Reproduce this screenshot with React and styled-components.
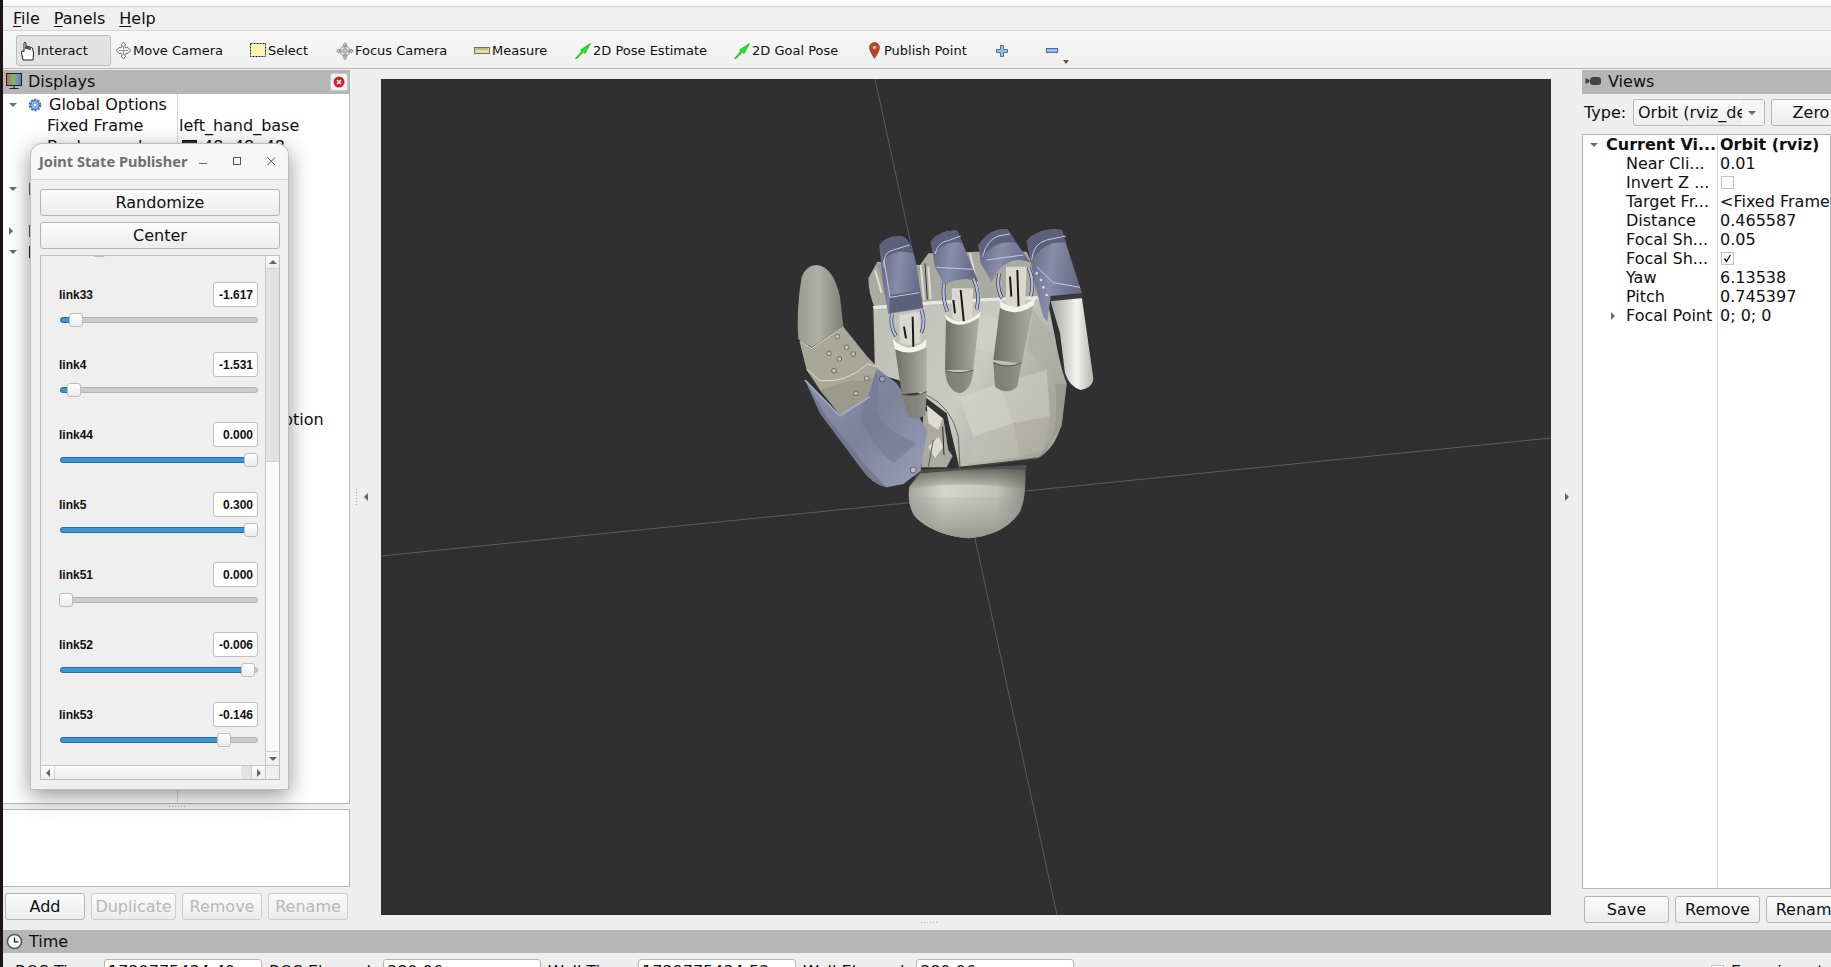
import React from 'react'
import styled, { createGlobalStyle } from 'styled-components'

const GlobalStyle = createGlobalStyle`
  html, body {
    margin: 0;
    padding: 0;
    width: 100%;
    height: 100%;
    overflow: hidden;
    background: #eeeeee;
  }
  * { box-sizing: border-box; }
`
const Page = styled.div`
  position: relative;
  width: 1831px;
  height: 967px;
  overflow: hidden;
  display: flex;
  flex-direction: column;
  background: #eeeeee;
  border-left: 3px solid #1b1317;
  font-family: "DejaVu Sans", sans-serif;
  font-size: 16px;
  color: #101010;
`
const TopStrip = styled.div`
  height: 7px;
  flex: none;
  background: #fbfbfb;
  border-bottom: 1px solid #cfcfcf;
`
const MenuBar = styled.div`
  height: 24px;
  flex: none;
  display: flex;
  align-items: center;
  padding-left: 10px;
  gap: 14px;
  background: #efefef;
  border-bottom: 1px solid #d6d6d6;
`
const MenuItem = styled.span`
  u { text-underline-offset: 2px; text-decoration-thickness: 1px; }
`
const Toolbar = styled.div`
  height: 38px;
  flex: none;
  display: flex;
  align-items: center;
  padding: 2px 0 0 13px;
  font-size: 13px;
  background: linear-gradient(#f7f7f7, #efefef);
  border-bottom: 1px solid #b9b9b9;
`
const Tool = styled.div`
  width: ${p => p.$w}px;
  flex: none;
  height: 31px;
  display: flex;
  align-items: center;
  gap: ${p => p.$gap || 1}px;
  white-space: nowrap;
  position: relative;
  ${p => p.$active && `
    background: #e2e2e2;
    border: 1px solid #bdbdbd;
    border-radius: 3px;
    padding-left: 3px;
    margin-right: 4px;
  `}
`
const MenuArrow = styled.span`
  position: absolute;
  left: 17px;
  bottom: 2px;
  border: 3px solid transparent;
  border-top: 4px solid #555555;
  border-bottom: 0;
`
const Main = styled.div`
  flex: none;
  height: 861px;
  display: flex;
`
const Dock = styled.div`
  width: ${p => p.$w}px;
  flex: none;
  display: flex;
  flex-direction: column;
`
const DockHeader = styled.div`
  height: ${p => p.$h || 24}px;
  flex: none;
  margin-top: ${p => p.$flush ? 0 : 1}px;
  padding-bottom: ${p => p.$flush ? 0 : 2}px;
  display: flex;
  align-items: center;
  gap: 6px;
  padding-left: 3px;
  background: #b6b6b6;
  position: relative;
`
const CloseBox = styled.div`
  position: absolute;
  right: 2px;
  top: 3px;
  width: 18px;
  height: 18px;
  background: #f4f4f4;
  border: 1px solid #c9c9c9;
  border-radius: 3px;
  display: flex;
  align-items: center;
  justify-content: center;
`
const TreeBox = styled.div`
  flex: none;
  height: ${p => p.$h}px;
  background: #ffffff;
  border: 1px solid #b5b5b5;
  border-width: ${p => p.$top ? '1px 1px 1px 0' : '0 1px 1px 0'};
  ${p => p.$framed && 'border-left-width: 1px;'}
  display: flex;
  flex-direction: column;
  position: relative;
  overflow: hidden;
`
const ColumnLine = styled.div`
  position: absolute;
  left: ${p => p.$x}px;
  top: 0;
  bottom: 0;
  width: 1px;
  background: #d8d8d8;
`
const DisplayRow = styled.div`
  height: 21px;
  flex: none;
  display: grid;
  grid-template-columns: 174px 1fr;
  align-items: center;
  white-space: nowrap;
`
const NameCell = styled.div`
  display: flex;
  align-items: center;
  padding-left: ${p => p.$indent}px;
  gap: 7px;
  position: relative;
  overflow: hidden;
  height: 100%;
`
const ValueCell = styled.div`
  padding-left: ${p => p.$pad || 2}px;
  display: flex;
  align-items: center;
  gap: 6px;
`
const Expander = styled.span`
  position: absolute;
  left: ${p => p.$x}px;
  top: 50%;
  ${p => p.$open ? `
    margin-top: -2px;
    border-left: 4px solid transparent;
    border-right: 4px solid transparent;
    border-top: 4px solid #6e6e6e;
  ` : `
    margin-top: -4px;
    border-top: 4px solid transparent;
    border-bottom: 4px solid transparent;
    border-left: 4px solid #6e6e6e;
  `}
`
const Swatch = styled.span`
  width: 15px;
  height: 13px;
  margin-left: 3px;
  background: #303030;
  border: 1px solid #111111;
`
const DotsH = styled.div`
  height: 5px;
  flex: none;
  display: flex;
  justify-content: center;
  align-items: center;
  &::before {
    content: "";
    width: 16px;
    height: 1px;
    background-image: linear-gradient(to right, #a5a5a5 1px, transparent 1px);
    background-size: 3px 1px;
  }
`
const ButtonRow = styled.div`
  flex: none;
  display: flex;
  gap: ${p => p.$gap}px;
  padding: ${p => p.$pad};
`
const PushButton = styled.button`
  width: ${p => p.$w}px;
  height: 27px;
  flex: none;
  padding: 0;
  margin-left: ${p => p.$ml || 0}px;
  font-family: inherit;
  font-size: 16px;
  color: ${p => p.disabled ? '#b8b8b8' : '#101010'};
  background: linear-gradient(#fbfbfb, #ececec);
  border: 1px solid ${p => p.disabled ? '#cccccc' : '#b4b4b4'};
  border-radius: 3px;
`
const Center = styled.div`
  flex: 1;
  display: flex;
  position: relative;
`
const Gutter = styled.div`
  width: 31px;
  flex: none;
  height: 856px;
  display: flex;
  align-items: center;
  justify-content: ${p => p.$right ? 'center' : 'flex-end'};
  padding-right: ${p => p.$right ? 0 : 13}px;
  gap: 7px;
`
const GripV = styled.span`
  width: 1px;
  height: 16px;
  background-image: linear-gradient(#a8a8a8 1px, transparent 1px);
  background-size: 1px 3px;
`
const ViewColumn = styled.div`
  flex: 1;
  display: flex;
  flex-direction: column;
  padding-top: 10px;
`
const Viewport = styled.svg`
  display: block;
  width: 1170px;
  height: 836px;
  flex: none;
  background: #303030;
`
const Grip = styled.div`
  height: 15px;
  display: flex;
  padding-left: 540px;
  align-items: center;
  &::before {
    content: "";
    width: 16px;
    height: 1px;
    background-image: linear-gradient(to right, #b0b0b0 1px, transparent 1px);
    background-size: 3px 1px;
  }
`
const TypeRow = styled.div`
  height: 27px;
  flex: none;
  margin: 5px 0 8px;
  display: flex;
  align-items: center;
  white-space: nowrap;
`
const TypeLabel = styled.span`
  width: 51px;
  flex: none;
  padding-left: 2px;
`
const Combo = styled.div`
  width: 132px;
  height: 27px;
  flex: none;
  display: flex;
  align-items: center;
  padding-left: 4px;
  border: 1px solid #b9b9b9;
  border-radius: 3px;
  background: linear-gradient(#fbfbfb, #ececec);
  position: relative;
  overflow: hidden;
`
const ComboArrow = styled.span`
  position: absolute;
  right: 0;
  top: 0;
  bottom: 0;
  width: 22px;
  background: #f4f4f4;
  &::after {
    content: "";
    position: absolute;
    left: 6px;
    top: 11px;
    border-left: 4px solid transparent;
    border-right: 4px solid transparent;
    border-top: 4px solid #666666;
  }
`
const ViewRow = styled.div`
  height: 19px;
  flex: none;
  display: grid;
  grid-template-columns: 135px 1fr;
  align-items: center;
  white-space: nowrap;
  font-weight: ${p => p.$bold ? 700 : 400};
`
const CheckBox = styled.span`
  width: 13px;
  height: 13px;
  flex: none;
  border: 1px solid #c4c4c4;
  background: #ffffff;
  display: inline-flex;
  align-items: center;
  justify-content: center;
  margin-left: 1px;
  margin-top: ${p => p.$mt || 0}px;
`
const TimeDock = styled.div`
  flex: none;
  display: flex;
  flex-direction: column;
`
const TimeFields = styled.div`
  display: flex;
  align-items: flex-start;
  padding-top: 6px;
  white-space: nowrap;
  position: relative;
`
const FieldLabel = styled.span`
  width: ${p => p.$w}px;
  flex: none;
  padding-top: 3px;
  padding-left: ${p => p.$pad}px;
`
const TimeInput = styled.div`
  width: 158px;
  height: 25px;
  flex: none;
  background: #ffffff;
  border: 1px solid #b5b5b5;
  border-radius: 3px;
  padding: 2px 0 0 3px;
`
const Experimental = styled.div`
  position: absolute;
  left: 1707px;
  top: 9px;
  display: flex;
  gap: 7px;
`
const JointWindow = styled.div`
  position: absolute;
  left: 27px;
  top: 143px;
  width: 259px;
  height: 647px;
  display: flex;
  flex-direction: column;
  background: #efefef;
  border: 1px solid #bdbdbd;
  border-radius: 12px 12px 0 0;
  box-shadow: 0 6px 22px rgba(0, 0, 0, 0.42);
`
const TitleBar = styled.div`
  height: 36px;
  flex: none;
  display: flex;
  align-items: center;
  padding: 0 0 2px 8px;
  background: #f7f7f7;
  border-bottom: 1px solid #d5d5d5;
  border-radius: 12px 12px 0 0;
  font-family: "Noto Sans", sans-serif;
  font-size: 14.6px;
  font-weight: 700;
  color: #736f6b;
  white-space: nowrap;
`
const WinGlyph = styled.svg`
  position: absolute;
  top: ${p => p.$y}px;
  left: ${p => p.$x}px;
`
const JointBody = styled.div`
  flex: 1;
  display: flex;
  flex-direction: column;
  gap: 6px;
  padding: 9px 8px 9px 9px;
  min-height: 0;
`
const ScrollArea = styled.div`
  flex: 1;
  min-height: 0;
  border: 1px solid #bdbdbd;
  display: grid;
  grid-template-columns: 1fr 14px;
  grid-template-rows: 1fr 14px;
  overflow: hidden;
`
const SliderList = styled.div`
  overflow: hidden;
  background: #efefef;
`
const SliderRow = styled.div`
  height: 70px;
  padding: 0 7px 0 18px;
  position: relative;
  top: -44px;
`
const SliderHead = styled.div`
  height: 25px;
  display: flex;
  align-items: center;
  justify-content: space-between;
  font-family: "Liberation Sans", sans-serif;
  font-weight: 700;
  font-size: 12px;
`
const ValueBox = styled.div`
  width: 45px;
  height: 25px;
  background: #ffffff;
  border: 1px solid #c0c0c0;
  border-radius: 3px;
  display: flex;
  align-items: center;
  justify-content: flex-end;
  padding-right: 4px;
`
const Track = styled.div`
  height: 6px;
  width: 198px;
  margin: 10px 0 0 1px;
  background: #cccccc;
  border: 1px solid #b3b3b3;
  border-radius: 3px;
  position: relative;
`
const TrackFill = styled.div`
  position: absolute;
  left: -1px;
  top: -1px;
  height: 6px;
  background: #3a97d4;
  border: 1px solid #2b6c9b;
  border-radius: 3px 0 0 3px;
`
const Handle = styled.div`
  position: absolute;
  top: -5px;
  width: 14px;
  height: 14px;
  margin-left: -7px;
  background: linear-gradient(#ffffff, #ececec);
  border: 1px solid #bdbdbd;
  border-radius: 3px;
`
const VBar = styled.div`
  display: flex;
  flex-direction: column;
  border-left: 1px solid #c6c6c6;
  background: #f9f9f9;
`
const BarButton = styled.div`
  flex: none;
  display: flex;
  align-items: center;
  justify-content: center;
  height: ${p => p.$h || 'auto'};
  width: ${p => p.$w || 'auto'};
  background: linear-gradient(#fbfbfb, #ededed);
  border: 0 solid #d0d0d0;
  border-width: ${p => p.$edge || 0};
`
const VTrack = styled.div`
  height: 193px;
  flex: none;
  background: #e2e2e2;
  border-bottom: 1px solid #d0d0d0;
`
const VThumb = styled.div`
  flex: 1;
`
const HBar = styled.div`
  display: flex;
  border-top: 1px solid #c6c6c6;
  background: linear-gradient(#fbfbfb, #eeeeee);
`
const HTrack = styled.div`
  flex: none;
  width: 10px;
  background: #e2e2e2;
  margin-left: auto;
`
const Corner = styled.div`
  border-top: 1px solid #c6c6c6;
  border-left: 1px solid #c6c6c6;
  background: #efefef;
`
const Tri = styled.span`
  ${p => ({
    up: 'border-left:4px solid transparent;border-right:4px solid transparent;border-bottom:4px solid #666;',
    down: 'border-left:4px solid transparent;border-right:4px solid transparent;border-top:4px solid #666;',
    left: 'border-top:4px solid transparent;border-bottom:4px solid transparent;border-right:4px solid #666;',
    right: 'border-top:4px solid transparent;border-bottom:4px solid transparent;border-left:4px solid #666;'
  })[p.$dir]}
`

const HandIcon = () => (
  <svg width="15" height="21" viewBox="0 0 15 21">
    <path d="M3 20 L1.5 13 Q1 10.5 3 11 L4 12 L4 3 Q5 1.5 6 3 L6 9 L6 6.5 Q7 5.5 8 6.5 L8 9.5 L8 7 Q9 6 10 7 L10 10 L10 8 Q11.5 7 12.5 8 L13.5 13 L13 20 Z" fill="#ffffff" stroke="#222222" strokeWidth="1" />
  </svg>
)
const MoveIcon = () => (
  <svg width="17" height="19" viewBox="0 0 17 19">
    <path d="M8.5 1 L11 4 L10 4 L10 6 L12 7 L12 6 L16 9.5 L12 13 L12 12 L10 13 L10 15 L11 15 L8.5 18 L6 15 L7 15 L7 13 L5 12 L5 13 L1 9.5 L5 6 L5 7 L7 6 L7 4 L6 4 Z" fill="#f2f2f2" stroke="#777777" strokeWidth="1" />
    <path d="M8.5 5 V14 M4 9.5 H13" stroke="#999999" strokeWidth="1" />
  </svg>
)
const SelectIcon = () => (
  <svg width="16" height="15" viewBox="0 0 16 15">
    <rect x="0.5" y="0.5" width="15" height="13" fill="#fbf5ae" stroke="#222222" strokeDasharray="2 1" />
  </svg>
)
const FocusIcon = () => (
  <svg width="18" height="18" viewBox="0 0 18 18">
    <path d="M9 0.5 L11 3 L10 3 L10 8 L15 8 L15 7 L17.5 9 L15 11 L15 10 L10 10 L10 15 L11 15 L9 17.5 L7 15 L8 15 L8 10 L3 10 L3 11 L0.5 9 L3 7 L3 8 L8 8 L8 3 L7 3 Z" fill="#c6c6c6" stroke="#8a8a8a" strokeWidth="0.8" />
    <circle cx="9" cy="9" r="5" fill="none" stroke="#8a8a8a" />
  </svg>
)
const RulerIcon = () => (
  <svg width="16" height="8" viewBox="0 0 16 8">
    <rect x="0.5" y="0.5" width="15" height="6" fill="#e8dca0" stroke="#777055" />
    <path d="M3 1 V3 M5 1 V3 M7 1 V3 M9 1 V3 M11 1 V3 M13 1 V3" stroke="#777055" strokeWidth="0.7" />
  </svg>
)
const ArrowIcon = () => (
  <svg width="16" height="16" viewBox="0 0 16 16">
    <path d="M0.5 15.5 L7 8 L5.5 7 L15.5 0.5 L10 10.5 L8.5 9 L2 15.5 Z" fill="#1fe81f" stroke="#0a9a0a" strokeWidth="0.6" />
  </svg>
)
const PinIcon = () => (
  <svg width="14" height="17" viewBox="0 0 14 17">
    <path d="M5.5 16.5 Q0.5 9 0.5 5.5 A5 5 0 0 1 10.5 5.5 Q10.5 9 5.5 16.5 Z" fill="#b5482c" stroke="#7e3a24" strokeWidth="0.6" />
    <circle cx="5.5" cy="5.5" r="1.8" fill="#e9b39c" />
  </svg>
)
const PlusIcon = () => (
  <svg width="12" height="12" viewBox="0 0 12 12">
    <path d="M4.5 0.5 H7.5 V4.5 H11.5 V7.5 H7.5 V11.5 H4.5 V7.5 H0.5 V4.5 H4.5 Z" fill="#9dbce4" stroke="#4a73ad" />
  </svg>
)
const MinusIcon = () => (
  <svg width="12" height="5" viewBox="0 0 12 5">
    <rect x="0.5" y="0.5" width="11" height="4" fill="#9dbce4" stroke="#4a73ad" />
  </svg>
)
const MonitorIcon = () => (
  <svg width="16" height="17" viewBox="0 0 16 17">
    <defs>
      <linearGradient id="mon" x1="0" x2="1" y1="0" y2="0">
        <stop offset="0" stopColor="#d45c5c" />
        <stop offset="0.5" stopColor="#6fc46f" />
        <stop offset="1" stopColor="#6c6cd8" />
      </linearGradient>
    </defs>
    <rect x="0.5" y="0.5" width="15" height="12" fill="url(#mon)" stroke="#222222" />
    <path d="M8 13 V15 M3.5 15.5 H12.5" stroke="#222222" strokeWidth="1.2" />
  </svg>
)
const GearIcon = () => (
  <svg width="14" height="14" viewBox="0 0 14 14">
    <circle cx="7" cy="7" r="5" fill="#9cc0ec" stroke="#3f73b8" strokeWidth="2.6" strokeDasharray="2 1.15" />
    <circle cx="7" cy="7" r="4.4" fill="none" stroke="#4a7fc4" />
    <circle cx="7" cy="7" r="2" fill="#ffffff" stroke="#5a8cd0" />
  </svg>
)
const ClockIcon = () => (
  <svg width="17" height="17" viewBox="0 0 17 17">
    <circle cx="8.5" cy="8.5" r="7" fill="#ffffff" stroke="#555555" strokeWidth="1.6" />
    <path d="M8.5 4.5 V8.8 H12.5" fill="none" stroke="#111111" strokeWidth="1.3" />
  </svg>
)
const CameraIcon = () => (
  <svg width="17" height="10" viewBox="0 0 17 10">
    <path d="M0.5 2 L4.5 4 L4.5 6 L0.5 8 Z" fill="#444444" />
    <rect x="5" y="1" width="11" height="8" rx="3" fill="#444444" />
  </svg>
)
const CloseDisc = () => (
  <svg width="12" height="12" viewBox="0 0 12 12">
    <circle cx="6" cy="6" r="5.5" fill="#d81e2c" />
    <path d="M4 4 L8 8 M8 4 L4 8" stroke="#ffffff" strokeWidth="1.5" />
  </svg>
)

const tools = [
  { w: 99, icon: <HandIcon />, label: 'Interact', active: true, gap: 2 },
  { w: 135, icon: <MoveIcon />, label: 'Move Camera' },
  { w: 86, icon: <SelectIcon />, label: 'Select', gap: 2 },
  { w: 138, icon: <FocusIcon />, label: 'Focus Camera' },
  { w: 101, icon: <RulerIcon />, label: 'Measure', gap: 2 },
  { w: 159, icon: <ArrowIcon />, label: '2D Pose Estimate', gap: 2 },
  { w: 135, icon: <ArrowIcon />, label: '2D Goal Pose', gap: 2 },
  { w: 127, icon: <PinIcon />, label: 'Publish Point' },
  { w: 50, icon: <PlusIcon /> },
  { w: 40, icon: <MinusIcon />, more: true }
]

const displayRows = [
  { name: 'Global Options', indent: 25, open: true, icon: <GearIcon /> },
  { name: 'Fixed Frame', indent: 44, value: 'left_hand_base' },
  { name: 'Background...', indent: 44, value: '48; 48; 48', swatch: true },
  { name: 'Frame Rate', indent: 44, value: '30' },
  { name: 'Global Status: Ok', indent: 25, open: true, badge: '#2c8a2c' },
  { name: 'Fixed Frame', indent: 44, value: 'OK' },
  { name: 'Grid', indent: 25, open: false, badge: '#4a5a70' },
  { name: 'RobotModel', indent: 25, open: true, badge: '#222222' },
  { name: 'Status: Ok', indent: 44 },
  { name: 'Visual Enabled', indent: 44 },
  { name: 'Collision Enabled', indent: 44 },
  { name: 'Mass Properties', indent: 44 },
  { name: 'Update Interval', indent: 44, value: '0' },
  { name: 'Alpha', indent: 44, value: '1' },
  { name: 'Description Source', indent: 44, value: 'Topic' },
  { name: 'Description Topic', indent: 44, value: '/robot_description' }
]

const viewRows = [
  { name: 'Current Vi...', value: 'Orbit (rviz)', bold: true, open: true },
  { name: 'Near Cli...', value: '0.01' },
  { name: 'Invert Z ...', check: 'off' },
  { name: 'Target Fr...', value: '<Fixed Frame>' },
  { name: 'Distance', value: '0.465587' },
  { name: 'Focal Sh...', value: '0.05' },
  { name: 'Focal Sh...', check: 'on' },
  { name: 'Yaw', value: '6.13538' },
  { name: 'Pitch', value: '0.745397' },
  { name: 'Focal Point', value: '0; 0; 0', closed: true }
]

// handle positions in px along the track, from the picture
const joints = [
  { name: 'link32', value: '-1.602', at: 38 },
  { name: 'link33', value: '-1.617', at: 15 },
  { name: 'link4', value: '-1.531', at: 13 },
  { name: 'link44', value: '0.000', at: 190 },
  { name: 'link5', value: '0.300', at: 190 },
  { name: 'link51', value: '0.000', at: 5 },
  { name: 'link52', value: '-0.006', at: 187 },
  { name: 'link53', value: '-0.146', at: 163 }
]

// one finger of the hand; the drawing order gives the overlaps of the model
const Finger = ({ lower, bulb, seam, knuckle, slots, cap, arcs, upper, dark, lining }) => (
  <g>
    <path d={lower} fill="url(#fingerGrey)" />
    <path d={bulb} fill="url(#fingerBulb)" />
    <path d={seam} fill="none" stroke="#56574f" strokeWidth="3" />
    <path d={knuckle} fill="#d9d9d1" />
    <path d={slots} fill="none" stroke="#1a1a1a" strokeWidth="6" />
    <path d={cap} fill="#f4f4ef" />
    <path d={upper} fill="url(#fingerBlue)" />
    <path d={dark} fill="#5d607a" />
    <path d={arcs} fill="none" stroke="#33344a" strokeWidth="11" />
    <path d={arcs} fill="none" stroke="#b6bbe0" strokeWidth="7" />
    <path d={lining} fill="none" stroke="#c3c8ea" strokeWidth="3" />
  </g>
)

const facets = [
  ['M620 300 L720 330 L700 430 L600 400 Z', '#d0d1c8'],
  ['M600 560 L720 520 L760 640 L640 680 Z', '#d3d4cb'],
  ['M720 520 L860 480 L870 620 L760 640 Z', '#c9cac0'],
  ['M640 680 L760 640 L780 740 L620 760 Z', '#bfc0b6'],
  ['M780 740 L760 640 L870 620 L850 720 Z', '#b3b4aa'],
  ['M820 300 L880 380 L900 470 L860 480 L800 420 Z', '#adaea4']
]

const Hand = () => (
  <g transform="translate(760 210) scale(0.33333)">
    <defs>
      <linearGradient id="fingerGrey" x1="0" x2="1" y1="0" y2="0">
        <stop offset="0" stopColor="#6d6e64" />
        <stop offset="0.5" stopColor="#8e8f84" />
        <stop offset="1" stopColor="#aeafa4" />
      </linearGradient>
      <linearGradient id="fingerBulb" x1="0" x2="1" y1="0" y2="0">
        <stop offset="0" stopColor="#7d7e74" />
        <stop offset="0.6" stopColor="#85867b" />
        <stop offset="1" stopColor="#96978c" />
      </linearGradient>
      <linearGradient id="fingerBlue" x1="0" x2="1" y1="0" y2="0.2">
        <stop offset="0" stopColor="#5f627c" />
        <stop offset="0.5" stopColor="#888da9" />
        <stop offset="1" stopColor="#666a86" />
      </linearGradient>
      <linearGradient id="thumbBlue" x1="0" x2="1" y1="0" y2="0.8">
        <stop offset="0" stopColor="#8f93b0" />
        <stop offset="0.55" stopColor="#7e8299" />
        <stop offset="1" stopColor="#9599b4" />
      </linearGradient>
      <linearGradient id="palm" x1="0" x2="1" y1="0" y2="0.5">
        <stop offset="0" stopColor="#bdbeb5" />
        <stop offset="0.6" stopColor="#c9cac2" />
        <stop offset="1" stopColor="#a5a69c" />
      </linearGradient>
      <linearGradient id="wrist" x1="0" x2="1" y1="0" y2="0">
        <stop offset="0" stopColor="#a4a59c" />
        <stop offset="0.3" stopColor="#d4d5cd" />
        <stop offset="0.75" stopColor="#c2c3ba" />
        <stop offset="1" stopColor="#8d8e85" />
      </linearGradient>
      <linearGradient id="wristShade" x1="0" x2="0" y1="0" y2="1">
        <stop offset="0" stopColor="#55564e" stopOpacity="0.95" />
        <stop offset="1" stopColor="#55564e" stopOpacity="0" />
      </linearGradient>
      <linearGradient id="wristBottom" x1="0" x2="0" y1="0" y2="1">
        <stop offset="0" stopColor="#9a9b92" stopOpacity="0" />
        <stop offset="1" stopColor="#8e8f86" stopOpacity="0.85" />
      </linearGradient>
      <linearGradient id="tipLight" x1="0" x2="1" y1="0" y2="0">
        <stop offset="0" stopColor="#a3a49e" />
        <stop offset="0.62" stopColor="#f2f2ee" />
        <stop offset="1" stopColor="#b6b6b0" />
      </linearGradient>
      <linearGradient id="thumbTip" x1="0" x2="1" y1="0" y2="0">
        <stop offset="0" stopColor="#9a9c90" />
        <stop offset="0.45" stopColor="#aeb0a4" />
        <stop offset="1" stopColor="#7f8175" />
      </linearGradient>
    </defs>

    {/* wrist */}
    <path d="M448 830 Q440 885 465 920 Q520 975 625 985 Q735 975 780 905 Q800 860 795 780 Q700 770 480 790 Z" fill="url(#wrist)" />
    <path d="M448 830 Q440 885 465 920 Q520 975 625 985 Q735 975 780 905 Q790 880 793 860 L448 860 Z" fill="url(#wristBottom)" />
    <path d="M470 780 L800 765 L795 840 Q640 810 450 835 Z" fill="url(#wristShade)" />

    {/* back plate of the palm */}
    <path d="M325 205 L352 155 L480 165 L505 130 L650 125 L800 125 L860 262 L345 295 Q325 250 325 205 Z" fill="#a9aaa0" />
    <path d="M345 180 L365 250 M482 165 L492 270 M505 170 L512 268 M630 130 L660 260" stroke="#dcddd4" strokeWidth="6" fill="none" />
    <path d="M350 160 L380 255 L470 240 L480 170 Z" fill="#8f9086" opacity="0.6" />
    <path d="M495 160 L502 268" stroke="#333" strokeWidth="3" fill="none" />

    {/* palm */}
    <path d="M340 290 L345 490 L415 510 L500 565 L560 610 L598 770 L830 745 Q885 720 905 640 L920 520 Q900 470 885 380 L860 260 Q600 265 340 290 Z" fill="url(#palm)" />
    {facets.map(([d, fill]) => <path key={d} d={d} fill={fill} opacity="0.7" />)}
    <path d="M338 288 Q600 262 860 258 L862 268 Q600 272 342 298 Z" fill="#e6e7de" />
    <path d="M500 555 Q575 590 595 680 L600 770" fill="none" stroke="#55564e" strokeWidth="2.5" />
    <path d="M625 770 Q720 762 830 742" fill="none" stroke="#55564e" strokeWidth="2" />
    <path d="M885 520 Q900 640 860 720 Q850 740 830 745 L905 650 L920 525 Z" fill="#96978c" opacity="0.7" />

    {/* thumb joint mechanics */}
    <path d="M490 600 L550 625 L565 720 L578 738 L560 772 L485 772 Z" fill="#a9aaa0" />
    <path d="M500 585 L548 625 L535 660 L505 640 Z M505 710 L535 680 L550 710 L525 745 Z" fill="#dcdcd3" />
    <path d="M548 650 L552 735" stroke="#26261f" strokeWidth="3" fill="none" />
    <path d="M520 690 L505 770" stroke="#55564e" strokeWidth="3" fill="none" />

    {/* thumb */}
    <path d="M135 510 L240 618 L345 470 L410 520 L502 660 L482 782 L430 822 L380 832 Q335 822 300 770 L180 610 Z" fill="url(#thumbBlue)" />
    <path d="M135 510 L180 610 L300 770 Q335 822 380 832 L320 770 L200 620 Z" fill="#6f728b" opacity="0.75" />
    <path d="M345 470 Q365 530 348 600 Q372 660 470 700 L400 760 Q330 700 300 620 Z" fill="#74778f" opacity="0.55" />
    <path d="M118 392 L155 415 L250 350 L322 440 L352 470 L322 562 L240 615 L180 540 L140 480 Z" fill="#a7a897" />
    <path d="M140 478 L180 512 Q260 520 322 462 L350 470 M120 392 L155 415 Q200 385 250 350" fill="none" stroke="#dedfd2" strokeWidth="3" />
    <path d="M180 540 L240 612 L322 562 L340 500 Q300 520 280 510 Z" fill="#9a9b8a" />
    <path d="M135 510 L240 618 L330 560" fill="none" stroke="#a9adcc" strokeWidth="5" />
    <path d="M115 388 Q108 300 125 200 Q140 165 170 165 Q220 170 240 260 L250 350 L155 412 Z" fill="url(#thumbTip)" />
    {[[232, 380], [207, 430], [260, 412], [280, 432], [238, 447], [222, 482], [320, 505], [288, 550]].map(([x, y]) => (
      <circle key={`${x}-${y}`} cx={x} cy={y} r="7" fill="#c2c3b4" stroke="#6b6c5e" strokeWidth="3" />
    ))}
    <circle cx="460" cy="780" r="9" fill="#b9bcd0" stroke="#5e6078" strokeWidth="3" />
    <circle cx="367" cy="507" r="9" fill="#9a9db4" stroke="#55586e" strokeWidth="3" />

    <Finger
      lower="M405 412 Q450 440 500 408 L500 545 L425 553 Z"
      bulb="M425 553 Q465 562 500 545 L496 616 Q470 632 445 620 Z"
      seam="M425 553 Q465 562 500 545"
      knuckle="M418 315 L478 305 L482 395 Q450 412 420 398 Z"
      slots="M458 320 L460 410 M432 350 L438 385"
      cap="M398 388 Q450 438 500 388 L498 412 Q450 440 405 418 Z"
      upper="M358 105 Q380 74 430 80 Q450 88 466 150 L490 295 L385 312 L370 230 Z"
      dark="M360 105 Q380 74 430 80 Q452 95 462 132 Q410 110 372 150 Z M390 255 L478 242 L488 292 L388 310 Z"
      arcs="M396 312 Q388 345 408 378 M484 300 Q498 335 484 368"
      lining="M372 172 Q368 125 400 120 L448 105 M372 150 L390 262 L478 248"
    />
    <Finger
      lower="M558 322 Q600 362 658 318 L640 480 L555 480 Z"
      bulb="M555 482 Q600 495 640 480 Q636 540 600 550 Q560 542 555 482 Z"
      seam="M556 482 Q600 495 640 480"
      knuckle="M575 235 L640 235 L635 330 Q605 345 578 325 Z"
      slots="M602 240 L612 340 M580 270 L585 310"
      cap="M553 312 Q605 360 662 305 L658 322 Q600 362 560 330 Z"
      upper="M512 95 Q540 58 592 62 L645 190 L655 215 Q610 195 552 225 L525 170 Z"
      dark="M512 95 Q540 58 592 62 L608 100 Q560 85 525 130 Z"
      arcs="M552 220 Q546 265 562 305 M640 205 Q662 250 650 298"
      lining="M525 132 Q535 95 565 92 L602 78 M530 172 L640 178"
    />
    <Finger
      lower="M720 292 Q770 322 822 280 L785 460 L700 450 Z"
      bulb="M700 455 Q745 478 785 458 L772 530 Q740 558 705 530 Z"
      seam="M700 458 Q745 478 785 458"
      knuckle="M738 170 L800 170 L795 285 Q765 305 738 280 Z"
      slots="M772 180 L776 300 M750 200 L754 260"
      cap="M718 270 Q770 315 826 262 L822 285 Q770 322 722 295 Z"
      upper="M655 105 Q690 52 742 58 Q790 130 812 158 Q760 135 715 180 L695 215 L662 160 Z"
      dark="M655 105 Q690 52 742 58 L770 100 Q710 85 668 140 Z"
      arcs="M718 190 Q708 230 726 265 M805 172 Q825 215 812 258"
      lining="M668 140 Q680 90 715 78 L750 72 M680 150 L790 135"
    />
    {/* little finger tip is the bright one */}
    <path d="M870 268 L965 258 L1000 505 Q1000 532 962 540 Q930 532 915 490 L900 370 Z" fill="url(#tipLight)" />
    <path d="M868 262 L965 252 L968 264 L872 274 Z" fill="#3a3a40" />
    <path d="M800 92 Q840 50 905 60 L966 250 L872 258 L862 335 L850 320 L825 225 Z" fill="url(#fingerBlue)" />
    <path d="M800 92 Q840 50 905 60 L920 100 Q860 85 815 150 Z" fill="#5d607a" />
    <path d="M815 150 Q820 100 860 90 L918 78 M830 170 L880 218 L960 232" fill="none" stroke="#c3c8ea" strokeWidth="3" />
    {[[830, 190], [843, 210], [850, 232], [860, 255]].map(([x, y]) => (
      <circle key={`${x}-${y}`} cx={x} cy={y} r="4" fill="#d6d9f0" />
    ))}
  </g>
)

const App = () => (
  <Page>
    <GlobalStyle />
    <TopStrip />
    <MenuBar>
      <MenuItem><u>F</u>ile</MenuItem>
      <MenuItem><u>P</u>anels</MenuItem>
      <MenuItem><u>H</u>elp</MenuItem>
    </MenuBar>
    <Toolbar>
      {tools.map((t, i) => (
        <Tool key={i} $w={t.active ? t.w - 4 : t.w} $active={t.active} $gap={t.gap}>
          {t.icon}
          {t.label && <span>{t.label}</span>}
          {t.more && <MenuArrow />}
        </Tool>
      ))}
    </Toolbar>
    <Main>
      <Dock $w={347}>
        <DockHeader>
          <MonitorIcon />
          Displays
          <CloseBox><CloseDisc /></CloseBox>
        </DockHeader>
        <TreeBox $h={710}>
          <ColumnLine $x={174} />
          {displayRows.map((r, i) => (
            <DisplayRow key={i}>
              <NameCell $indent={r.indent}>
                {r.open !== undefined && <Expander $x={6} $open={r.open} />}
                {r.icon}
                {r.badge && <svg width="14" height="14"><rect x="1" y="1" width="12" height="12" fill={r.badge} /></svg>}
                {r.name}
              </NameCell>
              <ValueCell>
                {r.swatch && <Swatch />}
                {r.value}
              </ValueCell>
            </DisplayRow>
          ))}
        </TreeBox>
        <DotsH />
        <TreeBox $h={78} $top />
        <ButtonRow $gap={6} $pad="6px 0 0 2px">
          <PushButton $w={80}>Add</PushButton>
          <PushButton $w={85} disabled>Duplicate</PushButton>
          <PushButton $w={80} disabled>Remove</PushButton>
          <PushButton $w={80} disabled>Rename</PushButton>
        </ButtonRow>
      </Dock>
      <Center>
        <Gutter>
          <GripV />
          <Tri $dir="left" />
        </Gutter>
        <ViewColumn>
          <Viewport viewBox="381 79 1170 836">
            <g stroke="#5d5d5d" strokeWidth="1" fill="none">
              <line x1="875" y1="79" x2="1057" y2="915" />
              <line x1="381" y1="556" x2="1551" y2="438" />
            </g>
            <Hand />
          </Viewport>
          <Grip />
        </ViewColumn>
        <Gutter $right>
          <Tri $dir="right" />
        </Gutter>
      </Center>
      <Dock $w={249}>
        <DockHeader>
          <CameraIcon />
          Views
        </DockHeader>
        <TypeRow>
          <TypeLabel>Type:</TypeLabel>
          <Combo>
            Orbit (rviz_default
            <ComboArrow />
          </Combo>
          <PushButton $w={80} $ml={6}>Zero</PushButton>
        </TypeRow>
        <TreeBox $h={755} $top $framed>
          <ColumnLine $x={134} />
          {viewRows.map((r, i) => (
            <ViewRow key={i} $bold={r.bold}>
              <NameCell $indent={r.bold ? 23 : 43}>
                {r.open && <Expander $x={7} $open />}
                {r.closed && <Expander $x={28} />}
                {r.name}
              </NameCell>
              <ValueCell $pad={2}>
                {r.check ? (
                  <CheckBox>
                    {r.check === 'on' && (
                      <svg width="9" height="9" viewBox="0 0 9 9">
                        <path d="M1.5 4.5 L3.5 7.5 L7.5 1" fill="none" stroke="#111111" strokeWidth="1.4" />
                      </svg>
                    )}
                  </CheckBox>
                ) : r.value}
              </ValueCell>
            </ViewRow>
          ))}
        </TreeBox>
        <ButtonRow $gap={6} $pad="7px 0 0 2px">
          <PushButton $w={85}>Save</PushButton>
          <PushButton $w={85}>Remove</PushButton>
          <PushButton $w={85}>Rename</PushButton>
        </ButtonRow>
      </Dock>
    </Main>
    <TimeDock>
      <DockHeader $flush $h={23}>
        <ClockIcon />
        Time
      </DockHeader>
      <TimeFields>
        <FieldLabel $w={101} $pad={12}>ROS Time:</FieldLabel>
        <TimeInput>1730775434.49</TimeInput>
        <FieldLabel $w={121} $pad={7}>ROS Elapsed:</FieldLabel>
        <TimeInput>380.96</TimeInput>
        <FieldLabel $w={97} $pad={7}>Wall Time:</FieldLabel>
        <TimeInput>1730775434.53</TimeInput>
        <FieldLabel $w={120} $pad={7}>Wall Elapsed:</FieldLabel>
        <TimeInput>380.96</TimeInput>
        <Experimental>
          <CheckBox $mt={3} />
          Experimental
        </Experimental>
      </TimeFields>
    </TimeDock>

    <JointWindow>
      <TitleBar>
        Joint State Publisher
        <WinGlyph $x={168} $y={19} width="9" height="2"><rect width="8" height="1" fill="#666" /></WinGlyph>
        <WinGlyph $x={202} $y={13} width="9" height="9"><rect x="0.5" y="0.5" width="7" height="7" fill="none" stroke="#555" /></WinGlyph>
        <WinGlyph $x={236} $y={13} width="9" height="9"><path d="M0.5 0.5 L8 8 M8 0.5 L0.5 8" stroke="#555" /></WinGlyph>
      </TitleBar>
      <JointBody>
        <PushButton $w={240}>Randomize</PushButton>
        <PushButton $w={240}>Center</PushButton>
        <ScrollArea>
          <SliderList>
            {joints.map(j => (
              <SliderRow key={j.name}>
                <SliderHead>
                  {j.name}
                  <ValueBox>{j.value}</ValueBox>
                </SliderHead>
                <Track>
                  <TrackFill style={{ width: j.at }} />
                  <Handle style={{ left: j.at }} />
                </Track>
              </SliderRow>
            ))}
          </SliderList>
          <VBar>
            <BarButton $h="13px" $edge="0 0 1px 0"><Tri $dir="up" /></BarButton>
            <VTrack />
            <VThumb />
            <BarButton $h="14px" $edge="1px 0 0 0"><Tri $dir="down" /></BarButton>
          </VBar>
          <HBar>
            <BarButton $w="14px" $edge="0 1px 0 0"><Tri $dir="left" /></BarButton>
            <HTrack />
            <BarButton $w="14px" $edge="0 0 0 1px"><Tri $dir="right" /></BarButton>
          </HBar>
          <Corner />
        </ScrollArea>
      </JointBody>
    </JointWindow>
  </Page>
)

export default App
